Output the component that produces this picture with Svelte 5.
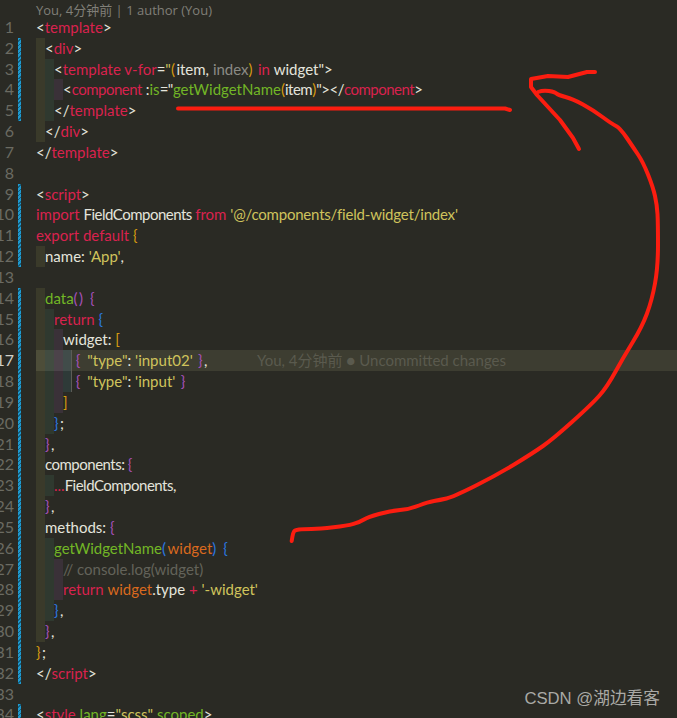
<script>
    const tag = (name) => [['w', '<'], ['t', name], ['w', '>']];
    const close = (name) => [['w', '</'], ['t', name], ['w', '>']];

    const lines = [
        { ind: 0, git: false, tokens: tag('template') },
        { ind: 1, git: true, tokens: tag('div') },
        { ind: 2, git: true, tokens: [['w', '<'], ['t', 'template v-for'], ['w', '='], ['s', '"'], ['y', '('], ['w', 'item, '], ['d', 'index'], ['y', ')'], ['t', ' in '], ['w', 'widget">']] },
        { ind: 3, git: true, tokens: [['w', '<'], ['t tight', 'component'], ['w', ' :'], ['g', 'is'], ['w tight', '="'], ['g', 'getWidgetName'], ['y flat', '('], ['w tight', 'item'], ['y flat', ')'], ['w tight', '"></'], ['t tight', 'component'], ['w', '>']] },
        { ind: 2, git: true, tokens: close('template') },
        { ind: 1, git: false, tokens: close('div') },
        { ind: 0, git: false, tokens: close('template') },
        { ind: 0, git: false, tokens: [] },
        { ind: 0, git: true, tokens: tag('script') },
        { ind: 0, git: true, tokens: [['t', 'import '], ['w tight', 'FieldComponents '], ['t', 'from '], ['s snug', "'@/components/field-widget/index'"]] },
        { ind: 0, git: true, tokens: [['t', 'export default '], ['y', '{']] },
        { ind: 1, git: true, tokens: [['w', 'name: '], ['s', "'App'"], ['w', ',']] },
        { ind: 0, git: false, tokens: [] },
        { ind: 1, git: true, tokens: [['g', 'data'], ['m', '() {']] },
        { ind: 2, git: true, tokens: [['t', 'return '], ['b', '{']] },
        { ind: 3, git: true, tokens: [['w', 'widget: '], ['y', '[']] },
        { ind: 4, git: true, active: true, tokens: [['w', ' '], ['m', '{ '], ['s', '"type"'], ['w', ': '], ['s', "'input02'"], ['m', ' }'], ['w', ',']] },
        { ind: 4, git: true, tokens: [['w', ' '], ['m', '{ '], ['s', '"type"'], ['w', ': '], ['s', "'input'"], ['m', ' }']] },
        { ind: 3, git: true, tokens: [['y', ']']] },
        { ind: 2, git: true, tokens: [['b', '}'], ['w', ';']] },
        { ind: 1, git: true, tokens: [['m', '}'], ['w', ',']] },
        { ind: 1, git: true, tokens: [['w tight', 'components: '], ['m', '{']] },
        { ind: 2, git: true, tokens: [['t', '...'], ['w tight', 'FieldComponents,']] },
        { ind: 1, git: true, tokens: [['m', '}'], ['w', ',']] },
        { ind: 1, git: true, tokens: [['w', 'methods: '], ['m', '{']] },
        { ind: 2, git: true, tokens: [['g', 'getWidgetName'], ['b', '('], ['o', 'widget'], ['b', ') {']] },
        { ind: 3, git: true, tokens: [['c', '// console.log(widget)']] },
        { ind: 3, git: true, tokens: [['t', 'return '], ['o', 'widget'], ['w', '.type '], ['t', '+ '], ['s', "'-widget'"]] },
        { ind: 2, git: true, tokens: [['b', '}'], ['w', ',']] },
        { ind: 1, git: true, tokens: [['m', '}'], ['w', ',']] },
        { ind: 0, git: true, tokens: [['y', '}'], ['w', ';']] },
        { ind: 0, git: true, tokens: close('script') },
        { ind: 0, git: false, tokens: [] },
        { ind: 0, git: true, tokens: [['w', '<'], ['t', 'style '], ['g', 'lang'], ['w', '='], ['s', '"scss" '], ['g', 'scoped'], ['w', '>']] }
    ];

    const levels = [1, 2, 3, 4];

    // hand drawn strokes, rounded through the midpoints
    function smooth(pts) {
        let d = `M${pts[0][0]} ${pts[0][1]}`;
        for (let i = 1; i < pts.length - 1; i++) {
            const mx = (pts[i][0] + pts[i + 1][0]) / 2;
            const my = (pts[i][1] + pts[i + 1][1]) / 2;
            d += ` Q${pts[i][0]} ${pts[i][1]} ${mx} ${my}`;
        }
        const last = pts[pts.length - 1];
        return d + ` L${last[0]} ${last[1]}`;
    }

    const underline = 'M178 108.5 L505 108.5 L510 110';
    const arrowHead = 'M595 72 L587 72 L568 77 L548 76 L531 79 L531 87 L537 95 L560 120 L573 138 L579 149';
    const arc = smooth([
        [538, 92], [543, 90], [555, 92], [558, 95], [573, 99], [593, 110], [612, 124], [620, 128],
        [633, 147], [643, 162], [653, 187], [657, 205], [658, 223], [658, 267], [652, 300], [642, 327],
        [623, 358], [607, 387], [592, 404], [553, 439], [533, 453], [497, 475], [453, 497], [440, 500],
        [428, 502], [410, 509], [390, 511], [368, 517], [360, 522], [347, 525.7], [320, 529], [303, 529],
        [295, 530], [293, 533], [291.7, 541]
    ]);
</script>

<div class="editor">
    <div class="lens">You, 4分钟前 | 1 author (You)</div>
    {#each lines as line, i}
        <div class="row" class:active={line.active}>
            <span class="num">{i + 1}</span>
            <span class="git" class:on={line.git}></span>
            <div class="code">
                {#each levels.slice(0, line.ind) as l}<span class="ind l{l}"></span>{/each}{#each line.tokens as tok}<span class={tok[0]}>{tok[1]}</span>{/each}
                {#if line.active}<span class="blame">You, 4分钟前 ● Uncommitted changes</span>{/if}
            </div>
        </div>
    {/each}

    <svg class="ink" width="677" height="718" viewBox="0 0 677 718" fill="none">
        <path d={underline} />
        <path d={arrowHead} />
        <path d={arc} />
    </svg>

    <div class="mark">CSDN @湖边看客</div>
</div>

<style>
    :global(body) {
        margin: 0;
        background: #2a2a24;
    }

    .editor {
        position: relative;
        width: 677px;
        height: 718px;
        overflow: hidden;
        background: #2a2a24;
        font-family: "Lato", "Noto Sans CJK SC", sans-serif;
        font-size: 15px;
    }

    .lens {
        height: 17px;
        padding-left: 36px;
        font-family: "Open Sans", "Noto Sans CJK SC", sans-serif;
        font-size: 13px;
        line-height: 20px;
        color: #807f78;
    }

    .row {
        display: flex;
        height: 20.84px;
        line-height: 20.84px;
    }

    .num {
        flex: none;
        width: 14px;
        text-align: right;
        font-size: 16px;
        color: #6b6b62;
        white-space: nowrap;
        direction: rtl;
    }

    .active .num {
        color: #d0d0c8;
    }

    .git {
        flex: none;
        width: 3px;
        margin: 0 15px 0 4px;
    }

    .git.on {
        background: repeating-linear-gradient(135deg, #1f9ad0 0 2px, #14607f 2px 3px);
    }

    .code {
        flex: 1;
        display: flex;
        white-space: pre;
    }

    .active .code {
        background: #3d3d31;
    }

    .ind {
        flex: none;
        width: 9px;
        height: 100%;
    }

    .l1 { background: #3a3a2a; }
    .l2 { background: #2f392f; }
    .l3 { background: #3a3138; }
    .l4 { background: #2e3a38; box-shadow: inset -1px 0 #5c5c56; }

    .active .l1 { background: #4d4d39; }
    .active .l2 { background: #424c41; }
    .active .l3 { background: #4c434a; }
    .active .l4 { background: #414c4a; }

    .w { color: #e4e4dc; }
    .t { color: #d9224e; }
    .s { color: #cfc35c; }
    .g { color: #72b626; }
    .y { color: #d69a10; letter-spacing: 1.5px; }
    .m { color: #a650b8; letter-spacing: 1.5px; }
    .b { color: #2a78e0; letter-spacing: 1.5px; }
    .o { color: #d9691e; }
    .d { color: #8a8a84; }
    .c { color: #63635a; }

    .tight { letter-spacing: -0.5px; }
    .snug { letter-spacing: -0.2px; }
    .flat { letter-spacing: 0; }

    .blame {
        position: absolute;
        left: 257px;
        color: #5a5a4e;
    }

    .ink {
        position: absolute;
        top: 0;
        left: 0;
        pointer-events: none;
    }

    .ink path {
        stroke: #fb1d10;
        stroke-width: 4;
        stroke-linecap: round;
        stroke-linejoin: round;
    }

    .mark {
        position: absolute;
        right: 17px;
        bottom: 9px;
        font-family: "Liberation Sans", "Noto Sans CJK SC", sans-serif;
        font-size: 16.700px;
        line-height: 20px;
        color: #a9a9a5;
    }
</style>
